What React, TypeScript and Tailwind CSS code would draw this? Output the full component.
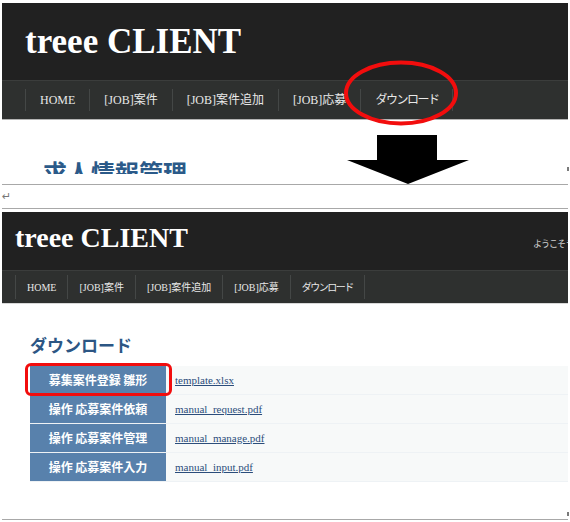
import React from "react";

const serif = "font-['Liberation_Serif','Noto_Sans_CJK_JP',serif]";

function NavItem({ label, big, last }: { label: string; big: boolean; last?: boolean }) {
  const kata = label === "ダウンロード";
  return (
    <div
      className={
        (big ? "h-[22px] px-[14px] text-[12px] " : "h-[24px] px-[11px] text-[10px] ") +
        "flex items-center border-l border-[#444746] text-[#e8e8e8] whitespace-nowrap " +
        (last ? "border-r " : "") +
        (kata ? (big ? "tracking-[-1.5px]" : "tracking-[-1.5px]") : "")
      }
    >
      {label}
    </div>
  );
}

const navLabels = ["HOME", "[JOB]案件", "[JOB]案件追加", "[JOB]応募", "ダウンロード"];

const rows = [
  ["募集案件登録 雛形", "template.xlsx"],
  ["操作 応募案件依頼", "manual_request.pdf"],
  ["操作 応募案件管理", "manual_manage.pdf"],
  ["操作 応募案件入力", "manual_input.pdf"],
];

export default function App() {
  return (
    <div className="relative w-[570px] h-[522px] bg-white overflow-hidden">
      <div className="pt-[3px] px-[2px]">
        {/* top screenshot */}
        <div>
          <div className="h-[77px] bg-[#212121] pl-[23px] pt-[21px]">
            <div className={serif + " font-bold text-[35px] leading-none text-white"}>treee CLIENT</div>
          </div>
          <div
            className={
              serif +
              " h-[40px] bg-[#2e302f] border-t border-[#3b3d3c] border-b border-b-[#b4b4b4] flex items-center pl-[23px]"
            }
          >
            {navLabels.map((l, i) => (
              <NavItem key={l} label={l} big last={i === navLabels.length - 1} />
            ))}
          </div>
          <div className="h-[64px]">
            <div className="h-[54px] overflow-hidden pt-[40px] pl-[41px]">
              <div className="font-['Noto_Sans_CJK_JP',sans-serif] font-bold text-[24px] leading-none text-[#2b5a89]">
                求人情報管理
              </div>
            </div>
          </div>
        </div>
        <div className="h-px bg-[#a8a8a8]" />
        <div className="h-[23px] flex items-center text-[11px] leading-none text-[#777777] font-['DejaVu_Sans',sans-serif]">
          ↵
        </div>
        <div className="h-px bg-[#a8a8a8]" />
        <div className="h-[3px]" />

        {/* bottom screenshot */}
        <div>
          <div className="h-[58px] bg-[#212121] pl-[13px] pt-[12px] flex items-baseline overflow-hidden">
            <div className={serif + " font-bold text-[28px] leading-none text-white shrink-0"}>treee CLIENT</div>
            <span className="ml-auto w-[35px] whitespace-nowrap font-['Noto_Sans_CJK_JP',sans-serif] text-[9px] tracking-[-1px] leading-none text-[#d0d0d0]">
              ようこそ テスト 様
            </span>
          </div>
          <div
            className={
              serif +
              " h-[34px] bg-[#2e302f] border-t border-[#3b3d3c] border-b border-b-[#d8d8d8] flex items-center pl-[13px]"
            }
          >
            {navLabels.map((l, i) => (
              <NavItem key={l} label={l} big={false} last={i === navLabels.length - 1} />
            ))}
          </div>
          <div className="pl-[28px]">
            <div className="mt-[32px] font-['Noto_Sans_CJK_JP',sans-serif] font-bold text-[17px] leading-none text-[#2c5684]">
              ダウンロード
            </div>
            <div className="mt-[13px] flex flex-col">
              {rows.map(([a, b]) => (
                <div key={b} className="flex h-[29px] border-b border-[#eef2f5]">
                  <div className="w-[136px] bg-[#5881ac] flex items-center justify-center font-['Noto_Sans_CJK_JP',sans-serif] font-bold text-[12px] text-white whitespace-nowrap">
                    {a}
                  </div>
                  <div className="flex-1 bg-[#f7f9f9] flex items-center pl-[9px]">
                    <span className="font-['Liberation_Serif',serif] text-[11px] text-[#2b4d7b] underline">{b}</span>
                  </div>
                </div>
              ))}
            </div>
          </div>
          <div className="mt-[37px] h-px bg-[#a8a8a8]" />
        </div>
      </div>

      {/* overlays */}
      <svg className="absolute left-0 top-0 pointer-events-none" width="570" height="522" viewBox="0 0 570 522">
        <ellipse cx="401" cy="93" rx="55" ry="30.5" fill="none" stroke="#f20d0d" strokeWidth="4" />
        <polygon points="377,135 437,135 437,160 469,160 408,184 347,160 377,160" fill="#000" />
      </svg>
      <div className="absolute left-[25px] top-[363px] w-[147px] h-[33px] border-[3px] border-[#f20d0d] rounded-[6px]" />
      <div className="absolute left-[567px] top-[167px] w-[2px] h-[4px] bg-[#7a7a7a]" />
      <div className="absolute left-[567px] top-[512px] w-[2px] h-[4px] bg-[#7a7a7a]" />
    </div>
  );
}
